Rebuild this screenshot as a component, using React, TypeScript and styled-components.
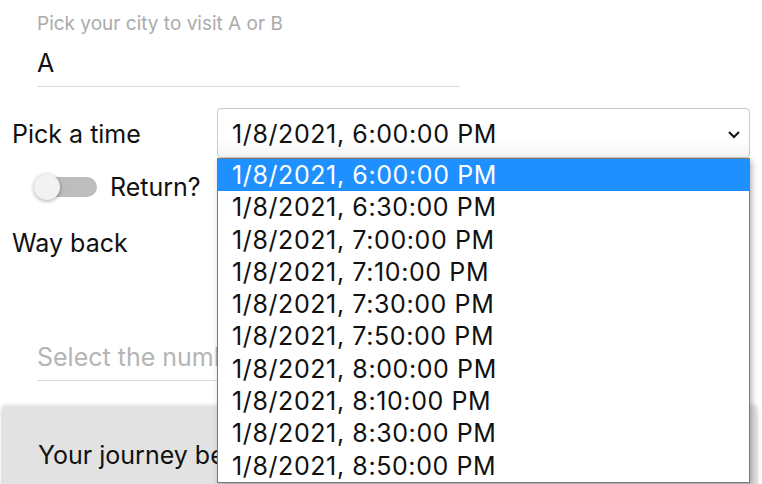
import React from "react";
import styled, { createGlobalStyle } from "styled-components";

const Global = createGlobalStyle`
  html, body { margin: 0; padding: 0; background: #fff; }
  body { font-family: "Inter", "Noto Sans", sans-serif; color: #111; overflow: hidden; }
`;

const Page = styled.div`
  width: 762px;
  height: 484px;
  overflow: hidden;
  position: relative;
`;

const CityField = styled.div`
  margin: 0 0 0 37px;
  width: 423px;
  padding-top: 12px;
  border-bottom: 1px solid #dcdcdc;
`;

const FloatLabel = styled.div`
  font-size: 19px;
  line-height: 24px;
  color: #ababab;
`;

const Value = styled.div`
  font-size: 25px;
  line-height: 30px;
  margin-top: 12px;
  padding-bottom: 8px;
`;

const TimeRow = styled.div`
  display: flex;
  align-items: center;
  margin-top: 21px;
  height: 50px;
`;

const RowLabel = styled.div`
  width: 205px;
  padding-left: 12px;
  padding-top: 2px;
  font-size: 25px;
  line-height: 30px;
`;

const SelectWrap = styled.div`
  position: relative;
  width: 533px;
  height: 50px;
`;

const SelectBox = styled.div`
  box-sizing: border-box;
  height: 50px;
  border: 1px solid #c8c8c8;
  border-radius: 4px;
  display: flex;
  align-items: center;
  justify-content: space-between;
  padding: 1px 8px 0 14px;
  font-size: 25px;
  letter-spacing: 0.6px;
  background: linear-gradient(#fff 60%, #f4f4f4);
`;

const DropList = styled.div`
  position: absolute;
  left: 0;
  top: 50px;
  width: 533px;
  box-sizing: border-box;
  border: 1px solid #7a7a7a;
  background: #fff;
  box-shadow: 2px 3px 6px rgba(0, 0, 0, 0.3);
  z-index: 5;
`;

const Option = styled.div<{ $active?: boolean }>`
  height: 32.3px;
  line-height: 32px;
  padding-left: 14px;
  font-size: 25px;
  letter-spacing: 0.6px;
  background: ${(p) => (p.$active ? "#1e90ff" : "#fff")};
  color: ${(p) => (p.$active ? "#fff" : "#111")};
`;

const ToggleRow = styled.div`
  display: flex;
  align-items: center;
  margin: 13px 0 0 37px;
  height: 32px;
  gap: 13px;
`;

const Track = styled.div`
  position: relative;
  width: 60px;
  height: 20px;
  border-radius: 10px;
  background: #bdbdbd;
`;

const Thumb = styled.div`
  position: absolute;
  left: -3px;
  top: -3px;
  width: 26px;
  height: 26px;
  border-radius: 50%;
  background: #f2f2f2;
  box-shadow: 0 1px 4px rgba(0, 0, 0, 0.35);
`;

const ToggleText = styled.div`
  font-size: 25px;
`;

const WayBack = styled.div`
  margin-top: 25px;
  padding-left: 12px;
  font-size: 25px;
  line-height: 30px;
`;

const NumberField = styled.div`
  margin: 84px 0 0 37px;
  width: 500px;
  border-bottom: 1px solid #dcdcdc;
  padding-bottom: 8px;
  font-size: 25px;
  line-height: 30px;
  color: #b5b5b5;
`;

const Summary = styled.div`
  margin: 25px 6px 0 3px;
  height: 120px;
  background: #e2e2e2;
  box-shadow: 0 1px 5px rgba(0, 0, 0, 0.3);
  padding: 34px 0 0 35px;
  box-sizing: border-box;
  font-size: 25px;
`;

const times = [
  "1/8/2021, 6:00:00 PM",
  "1/8/2021, 6:30:00 PM",
  "1/8/2021, 7:00:00 PM",
  "1/8/2021, 7:10:00 PM",
  "1/8/2021, 7:30:00 PM",
  "1/8/2021, 7:50:00 PM",
  "1/8/2021, 8:00:00 PM",
  "1/8/2021, 8:10:00 PM",
  "1/8/2021, 8:30:00 PM",
  "1/8/2021, 8:50:00 PM",
];

export default function App() {
  return (
    <Page>
      <Global />
      <CityField>
        <FloatLabel>Pick your city to visit A or B</FloatLabel>
        <Value>A</Value>
      </CityField>
      <TimeRow>
        <RowLabel>Pick a time</RowLabel>
        <SelectWrap>
          <SelectBox>
            <span>{times[0]}</span>
            <svg width="14" height="10" viewBox="0 0 14 10">
              <path d="M2 3 L7 8 L12 3" fill="none" stroke="#111" strokeWidth="2" />
            </svg>
          </SelectBox>
          <DropList>
            {times.map((t, i) => (
              <Option key={t} $active={i === 0}>
                {t}
              </Option>
            ))}
          </DropList>
        </SelectWrap>
      </TimeRow>
      <ToggleRow>
        <Track>
          <Thumb />
        </Track>
        <ToggleText>Return?</ToggleText>
      </ToggleRow>
      <WayBack>Way back</WayBack>
      <NumberField>Select the number of passengers</NumberField>
      <Summary>Your journey begins</Summary>
    </Page>
  );
}
